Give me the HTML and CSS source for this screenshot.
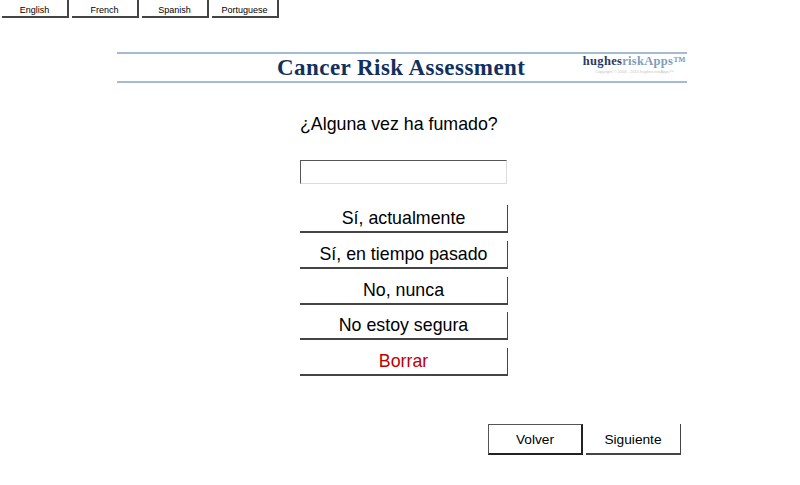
FILE: index.html
```html
<!DOCTYPE html>
<html lang="es">
<head>
  <meta charset="UTF-8">
  <title>Cancer Risk Assessment</title>
  <link rel="stylesheet" href="styles.css">
</head>
<body>
  <div class="lang-bar">
    <button class="lang-button">English</button>
    <button class="lang-button">French</button>
    <button class="lang-button">Spanish</button>
    <button class="lang-button">Portuguese</button>
  </div>

  <div class="banner">
    <h1>Cancer Risk Assessment</h1>
    <div class="logo">
      <div class="logo-name"><span class="logo-dark">hughes</span><span class="logo-light">riskApps™</span></div>
      <div class="logo-copy">Copyright © 2004 - 2015 hughes riskApps™</div>
    </div>
  </div>

  <div class="question">
    <p class="question-text">¿Alguna vez ha fumado?</p>
    <input class="answer-box" type="text">
    <div class="answers">
      <button class="answer-button">Sí, actualmente</button>
      <button class="answer-button">Sí, en tiempo pasado</button>
      <button class="answer-button">No, nunca</button>
      <button class="answer-button">No estoy segura</button>
      <button class="answer-button clear-button">Borrar</button>
    </div>
  </div>

  <div class="nav">
    <button class="nav-button nav-active">Volver</button>
    <button class="nav-button">Siguiente</button>
  </div>
</body>
</html>
```

FILE: styles.css
```css
body {
  margin: 0;
  height: 485px;
  overflow: hidden;
  background-color: #fff;
  color: #000;
  font-family: "Liberation Sans", Arial, sans-serif;
}

button {
  padding: 0;
  background-color: #fff;
  color: #000;
  font-family: inherit;
  cursor: pointer;
}

.lang-bar {
  display: flex;
  gap: 3px;
  padding-left: 2px;
}

.lang-button {
  width: 67px;
  height: 18px;
  padding-top: 3px;
  font-size: 9px;
  border: none;
  border-right: 2px solid #444;
  border-bottom: 2px solid #444;
}

.banner {
  position: relative;
  width: 570px;
  height: 27px;
  margin: 34px 0 0 117px;
  border-top: 2px solid #a3bbd4;
  border-bottom: 2px solid #a3bbd4;
}

h1 {
  margin: 0;
  padding-left: 160px;
  color: #12305f;
  font-family: "Liberation Serif", "Times New Roman", serif;
  font-size: 23px;
  letter-spacing: 0.45px;
  line-height: 28px;
  white-space: nowrap;
}

.logo {
  position: absolute;
  top: 0;
  right: 1px;
  text-align: center;
}

.logo-name {
  font-family: "Liberation Serif", "Times New Roman", serif;
  font-size: 12.5px;
  font-weight: bold;
  letter-spacing: 0.3px;
  line-height: 15px;
  white-space: nowrap;
}

.logo-dark {
  color: #1f3a68;
}

.logo-light {
  color: #7f9cbd;
}

.logo-copy {
  color: #c4c4c4;
  font-size: 4px;
  line-height: 5px;
  white-space: nowrap;
}

.question {
  display: flex;
  flex-direction: column;
  width: 208px;
  margin: 29px 0 0 300px;
}

.question-text {
  margin: 0;
  font-size: 17.8px;
  line-height: 24px;
  white-space: nowrap;
}

.answer-box {
  box-sizing: border-box;
  width: 207px;
  height: 24px;
  margin-top: 24px;
  padding: 0;
  border: 1px solid #ddd;
  border-top: 1px solid #555;
  border-left: 1px solid #555;
  outline: none;
}

.answers {
  display: flex;
  flex-direction: column;
  gap: 7.75px;
  margin-top: 21px;
}

.answer-button {
  width: 208px;
  height: 28px;
  padding-top: 1px;
  font-size: 17.8px;
  border: none;
  border-right: 1px solid #444;
  border-bottom: 2px solid #444;
}

.clear-button {
  color: #c00000;
}

.nav {
  display: flex;
  gap: 3px;
  margin: 48px 0 0 488px;
}

.nav-button {
  box-sizing: border-box;
  width: 95px;
  height: 31px;
  padding-top: 1px;
  font-size: 13.7px;
  border: none;
  border-right: 1px solid #444;
  border-bottom: 2px solid #444;
}

.nav-active {
  border: 1px solid #555;
  border-right: 2px solid #222;
  border-bottom: 2px solid #222;
}
```
